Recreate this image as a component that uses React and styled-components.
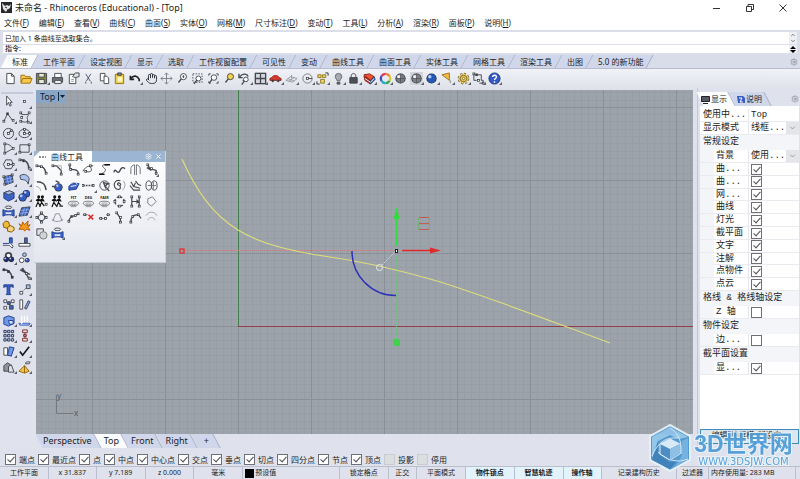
import React from "react";
import styled, { createGlobalStyle } from "styled-components";
import { Settings, ChevronDown, ChevronUp, Hand } from "lucide-react";

const GlobalStyle = createGlobalStyle`
  * {
    box-sizing: border-box;
  }
  body {
    margin: 0;
    font-family: "Noto Sans", "Noto Sans CJK SC", sans-serif;
    font-size: 8px;
    color: #1c1d22;
    background: #dfe2ec;
  }
  button, input, select {
    font: inherit;
    color: inherit;
    margin: 0;
    padding: 0;
    border: 0;
    background: none;
    border-radius: 0;
  }
  a {
    color: inherit;
    text-decoration: none;
  }
`;

const Window = styled.div`
  display: flex;
  flex-direction: column;
  min-height: 100vh;
`;

const TitleBar = styled.header`
  display: flex;
  align-items: center;
  height: 15px;
  padding: 0 2px 0 1px;
  gap: 3px;
  background: #fff;
`;

const Title = styled.h1`
  flex: 1;
  margin: 0;
  font-size: 9px;
  line-height: 14px;
  font-weight: 400;
`;

const WindowButton = styled.button`
  display: flex;
  align-items: center;
  justify-content: center;
  width: 30px;
  height: 15px;
`;

const MenuBar = styled.nav`
  height: 15px;
  padding: 0 4px;
  line-height: 15px;
  background: #fff;
`;

const MenuList = styled.div`
  display: flex;
  justify-content: space-between;
  max-width: 507px;
`;

const CommandArea = styled.section`
  display: flex;
  flex-direction: column;
  gap: 1px;
  height: 24px;
  padding: 2px 3px 1px;
  font-size: 7px;
  background: #dcdfe9;
`;

const CommandLine = styled.div`
  display: flex;
  justify-content: space-between;
  align-items: center;
  flex: ${(p) => p.$grow} 0 0;
  padding-left: 2px;
  background: #fff;
`;

const Prompt = styled.label`
  display: flex;
  flex: 1;
  gap: 2px;
  line-height: 8px;
  font-weight: 500;

  input {
    flex: 1;
    height: 8px;
    outline: none;
  }
`;

const Scroller = styled.span`
  display: flex;
  flex-direction: column;
  align-items: center;
  justify-content: center;
  align-self: stretch;
  width: 8px;
  background: #eeeff3;
`;

const TabStrip = styled.div`
  display: flex;
  align-items: stretch;
  height: 15px;
  padding: 1px 2px 0 4px;
  background: #d9ddea;
  border-bottom: 1px solid #b6bccd;
`;

const Tab = styled.button`
  position: relative;
  z-index: 0;
  flex: none;
  padding: 0 ${(p) => p.$padRight || 7}px 0 ${(p) => p.$padLeft || 8}px;
  line-height: 12px;
  white-space: nowrap;

  &::before {
    content: "";
    position: absolute;
    z-index: -1;
    inset: 0;
    transform: skewX(${(p) => (p.$lean === "right" ? 28 : -28)}deg);
    background: ${(p) => (p.$active ? "#fbfcfe" : "#d0d7ea")};
    border-right: 1px solid #aab1c6;
  }
`;

const GearButton = styled.button`
  display: flex;
  align-items: center;
  margin-left: auto;
  color: #85888f;
`;

const ToolBar = styled.div`
  height: 19px;
  padding: 1px 3px;
  background: linear-gradient(#f0f2f7, #dfe2ea);
`;

const ToolGrid = styled.div`
  display: grid;
  grid-template-columns: repeat(${(p) => p.$cols}, 1fr);
  grid-auto-rows: 1fr;
  width: ${(p) => p.$width}px;
  height: ${(p) => p.$height}px;
`;

const ToolButton = styled.button`
  position: relative;
  display: flex;
  align-items: center;
  justify-content: center;

  &::after {
    content: "";
    display: ${(p) => (p.$flyout ? "block" : "none")};
    position: absolute;
    right: 0;
    bottom: 1px;
    border-left: 3px solid transparent;
    border-bottom: 3px solid #5d6067;
  }
`;

const Glyph = styled.svg`
  display: block;
  flex: none;
  width: 13px;
  height: 13px;
  fill: none;
  stroke: #44474e;
  stroke-width: 1;
`;

const Main = styled.main`
  position: relative;
  display: flex;
  flex: 1;
`;

const SideBar = styled.aside`
  width: 36px;
  flex: none;
  padding: 4px 3px 0 1px;
  background: #e0e3ed;
`;

const Handle = styled.div`
  height: 2px;
  background: #c5cada;
`;

const Center = styled.div`
  display: flex;
  flex-direction: column;
  flex: 1;
  padding-top: 2px;
`;

const Viewport = styled.section`
  position: relative;
  flex: 1;
  min-height: 200px;
  overflow: hidden;
  background: #9ca3ab;
`;

const Canvas = styled.svg`
  position: absolute;
  inset: 0;
  width: 100%;
  height: 100%;
`;

const ViewportLabel = styled.button`
  position: absolute;
  left: 0;
  top: 0;
  display: flex;
  align-items: center;
  gap: 3px;
  padding: 0 1px 0 4px;
  height: 13px;
  font-size: 9px;
  line-height: 13px;
  color: #14233a;
  background: #88a6c6;
`;

const ViewTabs = styled.div`
  display: flex;
  height: 14px;
  padding-left: 3px;
  font-size: 9px;
  background: #dfe2ec;
`;

const Floating = styled.section`
  position: absolute;
  left: 34px;
  top: 63px;
  width: 132px;
  height: 112px;
  background: linear-gradient(#fdfdfe 10%, #e3e6ee);
  border-right: 1px solid #cdd3df;
  border-bottom: 1px solid #c3cad6;
`;

const FloatingTitle = styled.div`
  display: flex;
  align-items: center;
  height: 11px;
  padding-right: 4px;
  gap: 4px;
  color: #fff;
  background: #9bb5d2;
`;

const FloatingTab = styled.h2`
  display: flex;
  align-items: center;
  gap: 5px;
  width: 58px;
  height: 11px;
  margin: 0 auto 0 0;
  padding-left: 5px;
  font-size: 8px;
  font-weight: 400;
  line-height: 11px;
  color: #1c1d22;
  background: #fff;
  clip-path: polygon(6px 0, 100% 0, 100% 100%, 0 100%, 0 6px);
`;

const Panel = styled.aside`
  display: flex;
  flex-direction: column;
  flex: none;
  width: 103px;
  margin-left: 4px;
  padding: 4px 1px 4px 2px;
  border-left: 1px solid #c3c8d6;
`;

const PanelTabs = styled.div`
  display: flex;
  height: 14px;
`;

const TabLabel = styled.span`
  display: flex;
  align-items: center;
  gap: 1px;
`;

const PanelBody = styled.div`
  flex: 1;
  padding-top: 3px;
  font-family: "Liberation Mono", "Noto Sans CJK SC", monospace;
  font-size: 9px;
  line-height: 12px;
  background: #fff;
`;

const Category = styled.h3`
  margin: 0;
  padding-left: 3px;
  height: 15px;
  font-size: 9px;
  font-weight: 400;
  line-height: 15px;
  white-space: nowrap;
  background: #f4f5f8;
`;

const Checks = styled.div`
  display: grid;
  grid-auto-rows: 1fr;
  height: ${(p) => p.$height}px;
`;

const Row = styled.label`
  display: grid;
  grid-template-columns: 49px 1fr;
  align-items: center;
  min-height: 12px;
  padding-left: ${(p) => (p.$indent ? 0 : 3)}px;
  border-bottom: 1px solid #e9ebf0;

  & > span:first-child {
    align-self: stretch;
    width: ${(p) => (p.$indent ? 49 : 46)}px;
    padding-left: ${(p) => (p.$indent ? 2 : 0)}px;
    border-left: ${(p) => (p.$indent ? "14px solid #f4f5f8" : "0")};
    border-right: 1px solid #e4e7ee;
    white-space: nowrap;
  }
  & > :nth-child(2) {
    margin-left: ${(p) => (p.$indent ? 2 : -1)}px;
  }
`;

const Combo = styled.span`
  display: flex;
  min-width: 0;

  select {
    flex: 1;
    min-width: 0;
    height: 12px;
    appearance: none;
  }
  svg {
    width: 13px;
    height: 12px;
    padding: 2px;
    color: #777a82;
    background: #e4e5e9;
  }
`;

const Check = styled.input.attrs({ type: "checkbox" })`
  position: relative;
  appearance: none;
  flex: none;
  width: 11px;
  height: 11px;
  border: 1px solid ${(p) => (p.disabled ? "#cbccd0" : "#6e7076")};
  background: ${(p) => (p.disabled ? "#dcddde" : "#fff")};

  &:checked::after {
    content: "";
    position: absolute;
    left: 3px;
    top: 0;
    width: 3px;
    height: 6px;
    border: solid #4c4e54;
    border-width: 0 1px 1px 0;
    transform: rotate(42deg);
  }
`;

const EditButton = styled.button`
  height: 15px;
  padding-bottom: 3px;
  line-height: 10px;
  white-space: nowrap;
  overflow: hidden;
  border: 1px solid #3f8bb8;
  background: #dde6ee;
`;

const SnapBar = styled.div`
  display: flex;
  align-items: center;
  gap: 3px;
  height: 18px;
  padding: 4px 5px 0;
`;

const Snap = styled.label`
  display: flex;
  align-items: center;
  gap: 3px;
  line-height: 11px;
  white-space: nowrap;
`;

const StatusBar = styled.footer`
  display: flex;
  height: 13px;
  padding-right: 4px;
  font-size: 7px;
  line-height: 12px;
  border-top: 1px solid #b9bfcd;
`;

const Cell = styled.div`
  display: flex;
  align-items: center;
  justify-content: ${(p) => (p.$left ? "flex-start" : "center")};
  flex: ${(p) => p.$w} 1 0;
  gap: 1px;
  padding-left: ${(p) => (p.$left ? 2 : 0)}px;
  white-space: nowrap;
  font-weight: ${(p) => (p.$on ? 700 : 400)};
  background: ${(p) => (p.$on ? "#e3f3fc" : "transparent")};
  border-right: 1px solid #b9bfcd;
`;

const Swatch = styled.i`
  width: 9px;
  height: 9px;
  background: #000;
`;

const Brand = styled.a`
  position: fixed;
  right: 7px;
  bottom: 7px;
  display: flex;
  align-items: center;
  gap: 1px;
  opacity: 0.9;
`;

const BrandText = styled.span`
  display: flex;
  flex-direction: column;
  align-items: center;
  width: 99px;
  padding-top: 4px;
  color: #4a9bd6;
  white-space: nowrap;
  -webkit-text-stroke: 2px #eef6fc;
  paint-order: stroke fill;

  b {
    font-family: "Liberation Sans", "Noto Sans CJK SC", sans-serif;
    font-size: 23px;
    font-weight: 700;
    line-height: 24px;
  }
  small {
    font-family: "DejaVu Sans", sans-serif;
    font-size: 10px;
    line-height: 12px;
  }
`;

// small square control points
const Dots = ({ at, c = "#33363c", f = "#fff" }) =>
  at.map(([x, y]) => (
    <rect key={`${x}-${y}`} x={x - 1} y={y - 1} width="2" height="2" fill={f} stroke={c} strokeWidth=".8" />
  ));

const Ball = ({ x = 7, y = 7, r = 5, c = "#345bc4", hi = "#b9cdf8" }) => (
  <g stroke="none">
    <circle cx={x} cy={y} r={r} fill="#22283a" />
    <circle cx={x} cy={y} r={r - 0.7} fill={c} />
    <circle cx={x - r / 3} cy={y - r / 3} r={r / 3} fill={hi} />
  </g>
);

const Lens = ({ x = 8, y = 5, r = 3.3, f = "#fff" }) => (
  <g>
    <circle cx={x} cy={y} r={r} fill={f} />
    <path d={`M${x - r + 1} ${y + r - 1}L${x - r - 2} ${y + r + 3}`} strokeWidth="1.4" />
  </g>
);

const Walker = ({ x }) => (
  <g stroke="#111" strokeWidth="1.3">
    <circle cx={x} cy="2" r="1" fill="#111" />
    <path d={`M${x} 4L${x - 1} 8L${x - 3} 13M${x - 1} 8L${x + 2} 12M${x - 3} 6L${x} 4L${x + 2} 7`} />
  </g>
);

const Rings = ({ text }) => (
  <>
    <text x="7" y="4" textAnchor="middle" fontSize="4" fontWeight="700" fill="#222" stroke="none">{text}</text>
    <ellipse cx="7" cy="9" rx="5.5" ry="2.3" stroke="#777" />
    <ellipse cx="7" cy="9.5" rx="3" ry="1" stroke="#999" />
    <path d="M4 12.5h6" stroke="#999" />
  </>
);

const blue = "#3c62c4";
const pale = "#a9c0f1";

const topIcons = [
  ["新建", <path d="M3 1.5h5l3 3v8H3zM8 1.5v3h3" fill="#fff" />],
  ["打开", <path d="M1 11V3.5h4l1 1.5h5v2h2L11 12H1l2-5h8" fill="#f8cc4b" stroke="#a26b08" />],
  ["保存", <><path d="M1.5 1.5h11v11h-11z" fill="#87863d" /><path d="M4 1.5h6v4H4zM4 8h6v4.500H4z" fill="#e8e8dc" /></>, 1],
  ["打印", <><path d="M4 6V1.500h7V6" fill="#fff" /><path d="M1.500 6h11v5h-11z" fill="#70747b" /><path d="M4 9h7v3.500H4z" fill="#eee" /></>],
  ["属性", <><path d="M2.500 2.500h7v10h-7z" fill="#fff" /><path d="M6 5l3-4h4v4L9 6z" fill="#dfe1e5" /><path d="M4.500 8h3M4.500 10h3" stroke="#999" /></>],
  ["剪切", <path d="M4 2l5 8M9.500 2l-5 8M4 10.500v2M10 10.500v2" stroke="#4c5568" />],
  ["复制", <><path d="M2.500 1.500h5v8h-5z" fill="#fff" /><path d="M6.500 4.500h3l2 2v6h-5z" fill="#fff" /></>],
  ["粘贴", <><path d="M2.500 2.500h9v10h-9z" fill="#efcf50" stroke="#937218" /><path d="M5 1h4v2.500H5z" fill="#888" /><path d="M5 5.500h5v5H5z" fill="#fff7c5" stroke="none" /></>],
  ["撤销", <path d="M2 7c3-4 7-3 9 1v2M1.500 4v4h4" stroke="#222" strokeWidth="1.8" />, 1],
  ["平移", <Hand width="13" height="13" x="0.500" y="0.500" strokeWidth="1.700" />],
  ["旋转视图", <path d="M7 1v12M1 7h12M5 3l2-2 2 2M5 11l2 2 2-2M3 5L1 7l2 2M11 5l2 2-2 2" stroke="#7c8087" />],
  ["缩放", <><Lens /><path d="M8 3.500v3M7 5h2" /></>],
  ["框选缩放", <><path d="M2 2h10v9H2z" strokeDasharray="1.500 1.500" /><Lens x={8} y={7} r={2.700} /></>],
  ["缩放至范围", <><path d="M2 4V2h2M10 2h2v2M12 10v2h-2M2 10v2h2" /><Lens x={7.500} y={6} r={3} /></>],
  ["缩放至选取", <Lens f="#f5d34a" />],
  ["复原视图", <><path d="M2 5c3-4 8-3 9 0M1 2v4h4M5 9h5" strokeWidth="1.400" /><Lens x={8.500} y={8} r={2.500} /></>, 1],
  ["四视图", <><path d="M1.500 1.500h11v11h-11z" fill="#d4d7de" /><path d="M1.500 1.500h11v11h-11zM7 1.500v11M1.500 7h11" strokeWidth="1.400" /></>, 1],
  ["右视图", <><path d="M1 9V7l2-1 2-2h4l2 2 2 1v2z" fill="#d83a2d" stroke="#8e2118" /><circle cx="4" cy="9.500" r="1" fill="#222" /><circle cx="10" cy="9.500" r="1" fill="#222" /></>, 1],
  ["工作平面", <path d="M1 9l5-4 7 2-5 4zM3 7l7 3M4 10l6-4M7 7V3" stroke="#85898f" strokeWidth=".8" />, 1],
  ["设定圆", <><circle cx="7" cy="7" r="5" stroke="#777b82" /><path d="M7 7h5" /><Dots at={[[7, 7]]} /></>, 1],
  ["选取物件", <><path d="M2 3h3.500v3H2zM7 3h3.500v3H7zM5 8h4v4H5z" fill="#f5d662" stroke="#8b7624" /><path d="M10 1h3v3M1 10v3h3" stroke="#333" /></>, 1],
  ["隐藏物件", <><path d="M3.500 5a3.500 3.500 0 0 1 7 0c0 2-1.500 2.500-2 4.500h-3C5 7.500 3.500 7 3.500 5z" fill="#a7aaaf" stroke="#666" /><path d="M5.500 11h3v2h-3z" fill="#777" /></>, 1],
  ["锁定物件", <><path d="M4.500 6V4c0-3 5-3 5 0v2" /><path d="M3 6h8v6H3z" fill="#4c4f55" /></>, 1],
  ["图层", <><path d="M1 3l6-1 5 3-4 4z" fill="#ee5430" stroke="#8e2413" /><path d="M1 4l7 5v4L2 9z" fill="#a32a1a" stroke="#8e2413" /><path d="M8 9l4-4 1 3-5 5z" fill="#3b5eae" stroke="#2b3b6b" /><path d="M2 7l6 4 4-4" stroke="#fff" /></>, 1],
  ["颜色", <g strokeWidth="2.400"><path d="M7 2a5 5 0 0 1 4.300 2.500" stroke="#ed7d31" /><path d="M11.300 4.500a5 5 0 0 1 0 5" stroke="#d6c935" /><path d="M11.300 9.500A5 5 0 0 1 7 12" stroke="#35a852" /><path d="M7 12a5 5 0 0 1-4.300-2.500" stroke="#29a9c6" /><path d="M2.700 9.500a5 5 0 0 1 0-5" stroke="#3b4fc4" /><path d="M2.700 4.500A5 5 0 0 1 7 2" stroke="#d8345f" /></g>, 1],
  ["着色", <><Ball c="#777a80" hi="#eee" r={5.500} /><path d="M7 2v10M2.500 7h9" stroke="#444" strokeWidth=".6" /></>],
  ["着色全部", <><path d="M0 0h14v14H0z" fill="#d2d4da" stroke="none" /><Ball c="#7c8087" hi="#eee" r={5.500} /><path d="M7 2v10M2.500 7h9" stroke="#444" strokeWidth=".6" /></>, 1],
  ["渲染", <Ball c="#2457b8" r={5.500} />, 1],
  ["灯光", <><path d="M1 3l8-2v8z" fill="#efbd44" stroke="#9d7312" /><path d="M10 9v3" stroke="#888" /></>, 1],
  ["选项", <><circle cx="7" cy="7" r="4.500" stroke="#6f5a18" strokeWidth="3.500" strokeDasharray="2 1.500" /><circle cx="7" cy="7" r="4.500" stroke="#efd05c" strokeWidth="2" strokeDasharray="2 1.500" /><circle cx="7" cy="7" r="3.500" fill="#efd05c" stroke="#836918" /><circle cx="7" cy="7" r="1.300" fill="#fff" stroke="#836918" /></>, 1],
  ["尺寸标注", <><path d="M2 2v7h3M4 3h6v6h2M8 12h4V9" /><Dots at={[[2, 2], [5, 3], [12, 12], [7, 9]]} /></>, 1],
  ["说明", <><circle cx="7" cy="7" r="6" fill="#345cc4" stroke="#1c3585" /><path d="M5 5.500c0-3 4.500-2.500 4 0C9 7 7 7 7 8.500M7 10v1.500" stroke="#fff" strokeWidth="1.500" /></>, 1],
];

const sideIcons = [
  ["选取", <path d="M5 1v10l2-3 1.500 4 1.500-.8L8.500 8H11z" fill="#fff" />],
  ["点", <Dots at={[[7, 7]]} />, 1],
  ["多重直线", <><path d="M2 11L6 3l6 8" /><Dots at={[[2, 11], [6, 3], [12, 10]]} /></>, 1],
  ["控制点曲线", <><path d="M3 3c3 2 7 0 8 1s-2 2-1 4 0 4-2 4-3-1-5 0" /><Dots at={[[3, 2], [12, 2], [3, 11], [11, 12], [4, 7]]} /></>, 1],
  ["圆", <><circle cx="7" cy="7" r="5.500" /><path d="M7 7l3-4" /><Dots at={[[7, 7], [10, 4]]} /></>, 1],
  ["椭圆", <><ellipse cx="7" cy="7" rx="6" ry="4.500" /><path d="M7 2.500V7h6" strokeWidth=".7" /><Dots at={[[7, 7], [7, 2.500], [12.500, 7]]} /></>, 1],
  ["圆弧", <><path d="M3 2v10l9-5C10 4 7 2 3 2z" /><Dots at={[[3, 2], [3, 12], [12, 7]]} /></>, 1],
  ["矩形", <><path d="M2 3h10v8H2z" /><Dots at={[[2, 11], [12, 3]]} /></>, 1],
  ["多边形", <><path d="M4 2h6l2.500 5L10 11.500H4L1.500 7z" /><path d="M7 7h5" /><Dots at={[[7, 7], [12, 7]]} /></>, 1],
  ["曲线圆角", <><path d="M2 2c7 0 9 3 10 10" strokeWidth="1.600" /><Dots at={[[2, 2], [6, 3], [12, 11]]} /></>, 1],
  ["曲面", <><path d="M2 4l9-2 1 8-9 3z" fill={blue} /><path d="M5 3l2 9M8 3l2 8M2 7l9-2M3 10l9-2" stroke={pale} strokeWidth=".7" /><Dots at={[[2, 4], [11, 2], [3, 12]]} /></>, 1],
  ["曲面圆角", <path d="M2 3c4-3 9-1 10 3l-1 6c-1-4-4-5-8-5z" fill={pale} />, 1],
  ["立方体", <><path d="M2 4l6-2 5 2v6l-6 3-5-3z" fill={blue} stroke="#1f3d91" /><path d="M2 4l5 2 6-2-5-2z" fill={pale} /></>, 1],
  ["布尔运算", <><Ball x={9} y={5} r={4} /><Ball x={5} y={9} r={4.500} /></>, 1],
  ["投影曲线", <><ellipse cx="7" cy="2.500" rx="3.500" ry="1.400" /><path d="M1 5c3 2 9 2 12 0v7c-3-2-9-2-12 0z" fill={blue} stroke="#1f3d91" /><path d="M4 7.500c2 .5 4 .5 6 0v2.500c-2-.5-4-.5-6 0z" fill="#dbe6fb" stroke="none" /></>, 1],
  ["网格", <><path d="M4 3l9-1-3 9-9 1z" fill={blue} /><path d="M3 6l9-1M2 9l9-1M7 3l-3 9M10 3l-3 9" stroke={pale} strokeWidth=".7" /></>, 1],
  ["组合", <><path d="M1 4l3-3 3 1 1 3 1 2-3 2-4-1z" fill="#f0b936" stroke="#7a5208" /><path d="M6 8l3-2 4 2v3l-3 2-4-1z" fill="#f7d67c" stroke="#7a5208" /></>],
  ["炸开", <path d="M1 4l3 2 1-4 2 3 4-4-1 5 3-1-2 3 2 3-4-1-2 2-1-2H1l2-3z" fill="#f39a1f" stroke="#b15c08" />],
  ["修剪", <><path d="M1 8h7V2h3v6" fill={blue} stroke="#1f3d91" /><path d="M1 10h7l3 3 1-2-3-3" fill="#fff" /></>],
  ["分割", <><path d="M7 2h3v6H7z" fill={blue} /><path d="M1 8h12v3H1z" fill="#fff" /></>],
  ["群组", <><circle cx="7" cy="5" r="3" fill="#fff" strokeWidth="2" /><Ball x={4.500} y={9} r={3} c="#1f2f6e" /><Ball x={10} y={9} r={3} c="#1f2f6e" /></>, 1],
  ["解散群组", <><circle cx="7" cy="4" r="2" fill={pale} /><circle cx="4" cy="10" r="2.500" fill="#fff" /><Ball x={10} y={10} r={2.500} /></>],
  ["编辑点", <><path d="M2 3c5 0 8 3 9 9" strokeWidth="1.500" /><Dots at={[[2, 3], [7, 5], [11, 11]]} f="#33363c" /></>],
  ["控制点", <><path d="M2 3l6 3 4 7M5 1c2 5 5 6 8 7" strokeWidth="1.400" /><Dots at={[[5, 3], [9, 7], [12, 12]]} /></>, 1],
  ["文字", <path d="M2 2h10v3l-1-1H8.500v7l1 1.500h-5l1-1.500V4H3L2 5z" fill={blue} stroke="#1f3d91" />],
  ["移动", <><path d="M2 9h3v3H2z" fill="#fff" /><path d="M9 2h4v4H9z" fill={pale} /><path d="M5 9l4-4" strokeDasharray="1 1" /></>, 1],
  ["复制物件", <><path d="M2 2h3v3H2zM2 9h3v3H2zM10 2h3v3h-3z" fill="#fff" /><path d="M8 8h4v4H8zM6 4h3v3H6z" fill={blue} /></>],
  ["旋转", <><path d="M2 2h3v10H2z" fill="#fff" /><path d="M7 11l4-8 2 1-4 8z" fill="#7da4ea" /></>],
  ["实体编辑", <><path d="M2 4l5-2 6 2v6l-6 3-5-2z" fill="#6e98e6" stroke="#1f3d91" /><path d="M7 7h5v4H8z" fill="#cfdcf8" stroke="#1f3d91" /></>, 1],
  ["拉伸", <><path d="M1 10h12l-1 2H2z" fill={pale} stroke={blue} /><path d="M4 9V2M7 9V2M10 9V2M3 8l1 2 1-2" stroke="#fff" strokeWidth="1.300" /></>, 1],
  ["阵列", <path d="M2 1.500h2.500V4H2zM6 1.500h2.500V4H6zM10 1.500h2.500V4H10zM2 6h2.500v2.500H2zM6 6h2.500v2.500H6zM10 6h2.500v2.500H10zM2 10.500h2.500V13H2zM6 10.500h2.500V13H6zM10 10.500h2.500V13H10z" fill="#c6d3f0" stroke="#29355b" />, 1],
  ["对齐", <path d="M5 1h5v3H5zM6 6h3v2H6zM5 10h5v3H5zM7.500 4v6" fill="#eadcdc" stroke="#7b2b2b" />, 1],
  ["弯曲", <><path d="M2 3h4v8H2z" fill="#fff" /><path d="M6 11l2-9 5 1-3 9z" fill="#6e98e6" stroke="#1f3d91" /></>, 1],
  ["检查", <path d="M2 7l3 4 7-9" stroke="#15171a" strokeWidth="1.800" />, 1],
  ["边框", <><path d="M2 5l4-3 3 2v7H2z" fill="#8e939b" /><path d="M7 12V6l3-2 3 8z" fill="#dfe1e5" /></>, 1],
  ["金字塔", <><path d="M1 11l6-6 5 6-5 2z" fill="#f4c246" stroke="#936406" /><path d="M7 5v8" stroke="#936406" /><path d="M8 3l1-2h4l-1 2z" fill="#fff" /></>, 1],
];

const curveIcons = [
  ["圆角", <><path d="M2 3c6 0 9 2 10 9" strokeWidth="1.400" /><Dots at={[[2, 3], [7, 4], [12, 11]]} /></>],
  ["斜角", <><path d="M2 3h4l5 5v4" strokeWidth="1.400" /><path d="M6 3h5v5" stroke="#aaa" /><Dots at={[[2, 3], [11, 12]]} /></>],
  ["全部圆角", <><path d="M3 2v3c0 4 8 0 9 5v2" strokeWidth="1.400" /><Dots at={[[3, 2], [4, 7], [12, 12]]} /></>],
  ["混接", <><path d="M1 9c3-6 8-7 9-3s-3 4-6 3M8 3h4" /><Dots at={[[4, 9], [9, 3]]} /></>],
  ["可调式混接", <><path d="M11 2H6c-4 1 3 4 2 6s-3 4-6 4" /><path d="M7 2h6M1 12h6" stroke="#111" strokeWidth="1.600" /></>],
  ["衔接", <path d="M1 10c1-6 4 3 6-1s3-5 6-3" strokeWidth="1.500" />],
  ["对称", <path d="M2 12V6c0-2 2-4 4-4v11M8 13V2c2 0 4 2 4 4v6" stroke="#6a6d74" />],
  ["偏移", <><path d="M3 2l2 4 7 2v5M2 5l5 3" strokeWidth="1.500" /><Dots at={[[3, 2], [7, 6], [12, 11]]} /></>, 1],
  ["偏移曲线", <><path d="M2 3c6 0 9 2 10 9" strokeWidth="1.500" /><path d="M1 8c3 0 5 2 5 5" stroke="#aaa" /></>],
  ["曲面上偏移", <><Ball x={8} y={9} r={4.500} /><path d="M1 8h5M5 2l4 2" strokeWidth="1.500" /></>],
  ["投影", <><path d="M2 8l4-4 7 1-3 6-8 1z" fill={blue} stroke="#1f3d91" /><path d="M4 8l6-1M5 5c2-3 5-2 6 1" stroke="#fff" /></>],
  ["直线", <><path d="M1 7h12" strokeWidth="1.500" strokeDasharray="2 1" /><Dots at={[[1, 7], [12, 7]]} /></>, 1],
  ["重建", <><circle cx="7" cy="7" r="5" /><path d="M6 4l2 5 1-3 2-1zM9 9l3 4" strokeWidth="1.400" /></>],
  ["截面", <><path d="M8 2c-5-2-8 3-6 7 2 3 6 3 6 0s-4-2-3-4 4 0 3 2" strokeWidth="1.200" /><path d="M11 2c3 3 2 8-1 10" stroke="#999" /></>],
  ["三角", <path d="M2 3l3 5 7 2M1 7l4 5h7M7 2l3 4 3 1M5 8l2-4" strokeWidth="1.200" />],
  ["双视图曲线", <><ellipse cx="4" cy="7" rx="3" ry="5" /><ellipse cx="10" cy="7" rx="3" ry="5" /><path d="M3 7h9M9 3v8" stroke="#777" /></>],
  ["拟合", <><Walker x={4} /><Walker x={8} /><Dots at={[[12, 10]]} /></>],
  ["重新逼近", <><Walker x={4} /><Walker x={9} /><path d="M9 12h4" strokeWidth="1.500" /></>],
  ["拟合曲线", <Rings text="FIT" />],
  ["次数", <Rings text="DEG" />],
  ["整平", <Rings text="FAIR" />],
  ["周期", <><circle cx="7" cy="7" r="5" strokeDasharray="2 2" strokeWidth="1.500" /><Dots at={[[7, 2], [12, 7], [7, 12], [2, 7]]} /></>],
  ["镜射", <><path d="M3 2v10M11 2v10M3 7h8M8 5l2 2-2 2" strokeWidth="1.300" /><Dots at={[[3, 2], [3, 12], [11, 2], [11, 12]]} /></>],
  ["封闭", <path d="M3 4l5-2 4 5-5 5-4-3z" stroke="#777b82" />],
  ["起点", <><circle cx="7" cy="7" r="3.500" /><path d="M7 1v3M7 10v3M1 7h3M10 7h3" strokeWidth="1.500" /><Dots at={[[7, 2], [12, 7], [7, 12], [2, 7]]} /></>],
  ["简化", <path d="M2 11l3-8h4l3 8M1 9c3 3 8 3 12 0" stroke="#8c9097" />],
  ["延伸", <><path d="M2 12c0-5 3-6 6-7l5-2" strokeWidth="1.200" /><Dots at={[[2, 11], [5, 6], [9, 5], [12, 3]]} /></>],
  ["删除段", <><path d="M1 4h6" strokeDasharray="2 1" /><Dots at={[[3, 4]]} /><path d="M7 4l5 5M12 4l-5 5" stroke="#d92b22" strokeWidth="1.700" /></>],
  ["连接", <><path d="M1 8h5M9 4h4" strokeDasharray="2 1" /><Dots at={[[3, 8], [8, 8], [11, 4]]} /></>],
  ["垂直", <><path d="M4 2l4 6v5" strokeWidth="1.300" /><Dots at={[[4, 2], [8, 7], [8, 12]]} /></>],
  ["相切", <><path d="M2 12c0-6 4-8 8-8l3 4" strokeWidth="1.300" /><Dots at={[[2, 12], [4, 6], [10, 4]]} /></>],
  ["圆弧延伸", <path d="M1 5c3-5 9-5 12 0M3 10c2-4 6-4 8 0" stroke="#9da0a6" />],
  ["曲线布尔", <><path d="M2 2h7v7H2z" fill="#e0e2e6" /><circle cx="9" cy="9" r="4" fill="#cfd2d8" stroke="#777" /></>],
  ["曲面抽离", <><ellipse cx="7" cy="2.500" rx="3.500" ry="1.400" /><path d="M1 5c3 2 9 2 12 0v7c-3-2-9-2-12 0z" fill={blue} stroke="#1f3d91" /><path d="M4 7.500c2 .5 4 .5 6 0v2.500c-2-.5-4-.5-6 0z" fill="#dbe6fb" stroke="none" /></>, 1],
];

const menus = [
  ["文件", "F"], ["编辑", "E"], ["查看", "V"], ["曲线", "C"], ["曲面", "S"],
  ["实体", "O"], ["网格", "M"], ["尺寸标注", "D"], ["变动", "T"], ["工具", "L"],
  ["分析", "A"], ["渲染", "R"], ["面板", "P"], ["说明", "H"],
];

const toolTabs = [
  "标准", "工作平面", "设定视图", "显示", "选取", "工作视窗配置", "可见性", "变动",
  "曲线工具", "曲面工具", "实体工具", "网格工具", "渲染工具", "出图", "5.0 的新功能",
];

const displayChecks = ["曲...", "曲...", "网...", "曲线", "灯光", "截平面", "文字", "注解", "点物件", "点云"];

const snaps = ["端点", "最近点", "点", "中点", "中心点", "交点", "垂点", "切点", "四分点", "节点", "顶点"];

const Tools = ({ icons, cols, width, height }) => (
  <ToolGrid $cols={cols} $width={width} $height={height}>
    {icons.map(([name, shape, flyout]) => (
      <ToolButton key={name} aria-label={name} $flyout={flyout}>
        <Glyph viewBox="0 0 14 14">{shape}</Glyph>
      </ToolButton>
    ))}
  </ToolGrid>
);

const CheckRow = ({ label, on = true }) => (
  <Row $indent>
    <span>{label}</span>
    <Check defaultChecked={on} />
  </Row>
);

const ComboRow = ({ label, value, indent }) => (
  <Row $indent={indent}>
    <span>{label}</span>
    <Combo>
      <select>
        <option>{value}</option>
      </select>
      <ChevronDown />
    </Combo>
  </Row>
);

// grid, curve and gumball, all measured from the construction plane origin
const Scene = () => (
  <Canvas fill="none">
    <defs>
      <pattern id="grid" x="202" y="236" width="73" height="73" patternUnits="userSpaceOnUse">
        <path
          d="M7.500 0v73M14.500 0v73M22.500 0v73M29.500 0v73M36.500 0v73M44.500 0v73M51.500 0v73M58.500 0v73M66.500 0v73M0 7.500h73M0 14.500h73M0 22.500h73M0 29.500h73M0 36.500h73M0 44.500h73M0 51.500h73M0 58.500h73M0 66.500h73"
          stroke="#969da5"
        />
        <path d="M.5 0v73M0 .5h73" stroke="#8a9098" />
      </pattern>
    </defs>
    <rect width="100%" height="100%" fill="url(#grid)" />
    <path d="M20.500 305v18.500h17" stroke="#737980" />
    <text x="21" y="309" fontSize="8" fill="#555b63">y</text>
    <text x="38" y="326" fontSize="8" fill="#555b63">x</text>
    <svg x="202" y="236" overflow="visible">
      <path d="M.5 0v-236" stroke="#46804f" />
      <path d="M0 .5h4000" stroke="#923f47" />
      <path d="M-56-75.500h214" stroke="#bd8083" strokeDasharray="1 1" />
      <path d="M158.500-70v85" stroke="#6fbd79" strokeDasharray="2 1" />
      <path d="M-56-167C-42-136-26-112 0-96C24-81 58-74 92-69C127-64 164-55 192-47C232-36 302-9 372 17" stroke="#dedc7c" strokeWidth="1.200" />
      <path d="M114-75A44 44 0 0 0 158-30.500" stroke="#2c30b8" strokeWidth="1.500" />
      <path d="M158-75l-15 15" stroke="#cfd2d5" strokeDasharray="2 1" />
      <circle cx="141.500" cy="-58.500" r="3" stroke="#e8e9ea" />
      <path d="M158.500-80v-29" stroke="#2fdc3a" strokeWidth="1.500" />
      <path d="M155.500-107l3-12 3 12z" fill="#2fdc3a" />
      <path d="M164-75.500h30" stroke="#dc2c2c" strokeWidth="1.500" />
      <path d="M192-78.500l11 3-11 3z" fill="#dc2c2c" />
      <rect x="155" y="13" width="7" height="7" rx="2" fill="#3ed34a" />
      <rect x="157.500" y="-76.500" width="2" height="3" fill="#fff" stroke="#222" />
      <rect x="-58" y="-77" width="4" height="4" stroke="#e0302e" strokeWidth="1.300" />
      <path d="M180.500-108v12M191.500-108v12" stroke="#66b45e" strokeDasharray="2 1" />
      <path d="M181-108.500h10M181-102.500h10M181-96.500h10" stroke="#c0604f" />
    </svg>
  </Canvas>
);

const App = () => {
  return (
    <>
      <GlobalStyle />
      <Window>
        <TitleBar>
          <svg width="11" height="11" viewBox="0 0 11 11">
            <path d="M0 0h11v11H0z" fill="#26282b" />
            <path d="M1 1l3 3 2-1 2 1 2-2-1 4-3 2-1 2-3-3z" fill="#e5e6e8" />
            <path d="M4 5l2 1M6 8l3 1" stroke="#26282b" />
          </svg>
          <Title>未命名 - Rhinoceros (Educational) - [Top]</Title>
          <WindowButton aria-label="最小化">
            <svg width="8" height="8"><path d="M0 4.500h7" stroke="#333" /></svg>
          </WindowButton>
          <WindowButton aria-label="还原">
            <svg width="8" height="8" fill="none" stroke="#333"><path d="M.5 2.500h5v5h-5zM2 2V.5h5.500v5H6" /></svg>
          </WindowButton>
          <WindowButton aria-label="关闭">
            <svg width="8" height="8" stroke="#333"><path d="M.5.500l7 7M7.500.500l-7 7" /></svg>
          </WindowButton>
        </TitleBar>
        <MenuBar>
          <MenuList>
            {menus.map(([name, key]) => (
              <a href="#menu" key={name}>
                {name}(<u>{key}</u>)
              </a>
            ))}
          </MenuList>
        </MenuBar>
        <CommandArea>
          <CommandLine $grow={3}>
            <span>已加入 1 条曲线至选取集合。</span>
            <Scroller>
              <ChevronUp size={6} />
              <ChevronDown size={6} />
            </Scroller>
          </CommandLine>
          <CommandLine $grow={2}>
            <Prompt>
              指令: <input type="text" />
            </Prompt>
            <Scroller>
              <svg width="6" height="7"><path d="M0 3l3-3 3 3zM0 4l3 3 3-3z" /></svg>
            </Scroller>
          </CommandLine>
        </CommandArea>
        <TabStrip>
          {toolTabs.map((name, i) => (
            <Tab key={name} $active={i === 0}>{name}</Tab>
          ))}
          <GearButton aria-label="选项"><Settings size={8} /></GearButton>
        </TabStrip>
        <ToolBar>
          <Tools icons={topIcons} cols={32} width={499} height={16} />
        </ToolBar>

        <Main>
          <SideBar>
            <Handle />
            <Tools icons={sideIcons} cols={2} width={31} height={281} />
          </SideBar>
          <Center>
            <Viewport>
              <Scene />
              <ViewportLabel>
                Top
                <svg width="7" height="9"><path d="M.5 0v9" stroke="#14233a" /><path d="M2 3h5l-2.500 3z" fill="#14233a" /></svg>
              </ViewportLabel>
            </Viewport>
            <ViewTabs>
              <Tab $lean="right" $padLeft={4} $padRight={6}>Perspective</Tab>
              <Tab $lean="right" $padLeft={6} $padRight={6} $active>Top</Tab>
              <Tab $lean="right" $padLeft={6} $padRight={6}>Front</Tab>
              <Tab $lean="right" $padLeft={6} $padRight={6}>Right</Tab>
              <Tab $lean="right" $padLeft={10} $padRight={8}>+</Tab>
            </ViewTabs>
          </Center>
          <Panel>
            <PanelTabs>
              <Tab $lean="right" $padLeft={1} $padRight={5} $active>
                <TabLabel>
                  <svg width="9" height="9"><path d="M.5 1.500h8v5h-8z" fill="#555a62" stroke="#222" /><path d="M2 8.500h5" stroke="#222" /></svg>
                  显示
                </TabLabel>
              </Tab>
              <Tab $lean="right" $padLeft={4} $padRight={6}>
                <TabLabel>
                  <svg width="9" height="9"><path d="M1 1h6l2 2v5H2z" fill="#345cc4" /><path d="M3 3h3l-2 4h3" stroke="#fff" fill="none" /></svg>
                  说明
                </TabLabel>
              </Tab>
              <GearButton aria-label="面板选项"><Settings size={8} /></GearButton>
            </PanelTabs>
            <PanelBody>
              <Row>
                <span>使用中...</span>
                <span>Top</span>
              </Row>
              <ComboRow label="显示模式" value="线框..." />
              <Category>常规设定</Category>
              <ComboRow label="背景" value="使用..." indent />
              <Checks $height={128}>
                {displayChecks.map((name, i) => (
                  <CheckRow key={i} label={name} />
                ))}
              </Checks>
              <Category>格线 &amp; 格线轴设定</Category>
              <CheckRow label="Z 轴" on={false} />
              <Category>物件设定</Category>
              <CheckRow label="边..." on={false} />
              <Category>截平面设置</Category>
              <CheckRow label="显..." />
            </PanelBody>
            <EditButton>编辑“线框模式”设定...</EditButton>
          </Panel>
          <Floating>
            <FloatingTitle>
              <FloatingTab>
                <svg width="7" height="4"><path d="M0 2h7" stroke="#222" strokeDasharray="2 1" /></svg>
                曲线工具
              </FloatingTab>
              <Settings size={7} />
              <svg width="5" height="5" stroke="#fff"><path d="M.5.500l4 4M4.500.500l-4 4" /></svg>
            </FloatingTitle>
            <Tools icons={curveIcons} cols={8} width={125} height={79} />
          </Floating>
        </Main>

        <SnapBar>
          {snaps.map((name) => (
            <Snap key={name}>
              <Check defaultChecked />
              {name}
            </Snap>
          ))}
          <Snap><Check disabled />投影</Snap>
          <Snap><Check disabled />停用</Snap>
        </SnapBar>
        <StatusBar>
          <Cell $w={49}>工作平面</Cell>
          <Cell $w={48}>x 31.837</Cell>
          <Cell $w={49}>y 7.189</Cell>
          <Cell $w={49}>z 0.000</Cell>
          <Cell $w={49}>毫米</Cell>
          <Cell $w={96} $left><Swatch />预设值</Cell>
          <Cell $w={49}>锁定格点</Cell>
          <Cell $w={28}>正交</Cell>
          <Cell $w={49}>平面模式</Cell>
          <Cell $w={49} $on>物件锁点</Cell>
          <Cell $w={49} $on>智慧轨迹</Cell>
          <Cell $w={38} $on>操作轴</Cell>
          <Cell $w={76}>记录建构历史</Cell>
          <Cell $w={32}>过滤器</Cell>
          <Cell $w={86} $left>内存使用量: 283 MB</Cell>
        </StatusBar>
      </Window>
      <Brand href="#site">
        <svg width="46" height="48" viewBox="0 0 44 48">
          <path d="M22 1l20 11v24L22 47 2 36V12z" fill="#4793cb" stroke="#e7f2fa" strokeWidth="2" />
          <path d="M22 3l18 10-9 2-9-4-12 6-6 17V13z" fill="#8cc4ea" />
          <path d="M4 36l6-19v13l12 8 7-1-7 8z" fill="#2f78b4" />
          <path d="M40 14v21L23 45c7-5 10-9 11-16V17z" fill="#69aee0" />
          <path d="M4 32c6-14 14-19 26-18M22 4c9 5 12 14 11 26M40 35c-10 4-20 2-30-7" fill="none" stroke="#d3e9f8" />
          <path d="M22 15l10 5v10l-10 6-10-6V20z" fill="#3c84bf" stroke="#e7f2fa" />
          <path d="M12 20l10-5 10 5-10 5z" fill="#d6ebf9" />
          <path d="M22 25l10-5v10l-10 6z" fill="#86bde5" />
        </svg>
        <BrandText>
          <b>3D世界网</b>
          <small>WWW.3DSJW.COM</small>
        </BrandText>
      </Brand>
    </>
  );
};

export default App;
